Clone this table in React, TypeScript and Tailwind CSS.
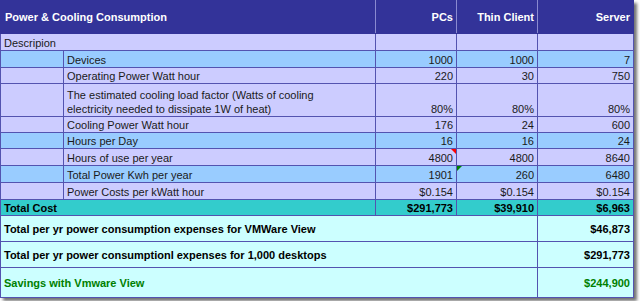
const rows = [
  { label: ['Devices'], pcs: '1000', thin: '1000', server: '7', blue: true, h: 'h-[17px]' },
  { label: ['Operating Power Watt hour'], pcs: '220', thin: '30', server: '750', h: 'h-[16px]' },
  {
    label: ['The estimated cooling load factor (Watts of cooling', 'electricity needed to dissipate 1W of heat)'],
    pcs: '80%',
    thin: '80%',
    server: '80%',
    h: 'h-[33px]',
  },
  { label: ['Cooling Power Watt hour'], pcs: '176', thin: '24', server: '600', h: 'h-[16px]' },
  { label: ['Hours per Day'], pcs: '16', thin: '16', server: '24', blue: true, h: 'h-[16px]' },
  { label: ['Hours of use per year'], pcs: '4800', thin: '4800', server: '8640', h: 'h-[17px]', note: true },
  { label: ['Total Power Kwh per year'], pcs: '1901', thin: '260', server: '6480', blue: true, h: 'h-[17px]', flag: true },
  { label: ['Power Costs per kWatt hour'], pcs: '$0.154', thin: '$0.154', server: '$0.154', h: 'h-[17px]' },
];

const cell = 'border border-[#5353b0] px-[3px] align-bottom leading-[14px]';

export default function App() {
  return (
    <div className="w-[640px] h-[301px] bg-white overflow-hidden">
      <div className="w-[634px] shadow-[3px_3px_3px_rgba(0,0,0,0.55)]">
        <table
          className="table-fixed border-collapse text-[11px] text-[#1a1a1a]"
          style={{ fontFamily: '"Liberation Sans", Arial, sans-serif' }}
        >
          <colgroup>
            <col className="w-[63px]" />
            <col className="w-[312px]" />
            <col className="w-[81px]" />
            <col className="w-[81px]" />
            <col className="w-[96px]" />
          </colgroup>
          <tbody>
            <tr className="h-[33px] bg-[#333399] text-white font-bold">
              <td colSpan={2} className="border border-[#333399] border-r-[#8a8ad0] px-[4px] align-middle">
                Power &amp; Cooling Consumption
              </td>
              <td className="border border-[#333399] border-r-[#8a8ad0] px-[3px] text-right align-middle">PCs</td>
              <td className="border border-[#333399] border-r-[#8a8ad0] px-[3px] text-right align-middle">Thin Client</td>
              <td className="border border-[#333399] px-[3px] text-right align-middle">Server</td>
            </tr>
            <tr className="h-[17px] bg-[#ccccff]">
              <td colSpan={2} className={cell}>Descripion</td>
              <td className={cell}></td>
              <td className={cell}></td>
              <td className={cell}></td>
            </tr>
            {rows.map((r) => (
              <tr key={r.label[0]} className={`${r.h} ${r.blue ? 'bg-[#99ccff]' : 'bg-[#ccccff]'}`}>
                <td className={cell}></td>
                <td className={`${cell} whitespace-nowrap`}>
                  {r.label.map((line, i) => (
                    <div key={i}>{line}</div>
                  ))}
                </td>
                <td className={`${cell} text-right relative`}>
                  {r.pcs}
                  {r.note && (
                    <span className="absolute top-0 right-0 w-0 h-0 border-t-[5px] border-t-[#ff0000] border-l-[5px] border-l-transparent" />
                  )}
                </td>
                <td className={`${cell} text-right relative`}>
                  {r.thin}
                  {r.flag && (
                    <span className="absolute top-0 left-0 w-0 h-0 border-t-[5px] border-t-[#008000] border-r-[5px] border-r-transparent" />
                  )}
                </td>
                <td className={`${cell} text-right`}>{r.server}</td>
              </tr>
            ))}
            <tr className="h-[16px] bg-[#33cccc] font-bold text-black">
              <td colSpan={2} className={cell}>Total Cost</td>
              <td className={`${cell} text-right`}>$291,773</td>
              <td className={`${cell} text-right`}>$39,910</td>
              <td className={`${cell} text-right`}>$6,963</td>
            </tr>
            <tr className="h-[26px] bg-[#ccffff] font-bold text-black">
              <td colSpan={4} className={`${cell} align-middle`}>
                Total per yr power consumption expenses for VMWare View
              </td>
              <td className={`${cell} text-right align-middle`}>$46,873</td>
            </tr>
            <tr className="h-[26px] bg-[#ccffff] font-bold text-black">
              <td colSpan={4} className={`${cell} align-middle`}>
                Total per yr power consumptionl expenses for 1,000 desktops
              </td>
              <td className={`${cell} text-right align-middle`}>$291,773</td>
            </tr>
            <tr className="h-[30px] bg-[#ccffff] font-bold text-[#008000]">
              <td colSpan={4} className={`${cell} align-middle`}>Savings with Vmware View</td>
              <td className={`${cell} text-right align-middle`}>$244,900</td>
            </tr>
          </tbody>
        </table>
      </div>
    </div>
  );
}
